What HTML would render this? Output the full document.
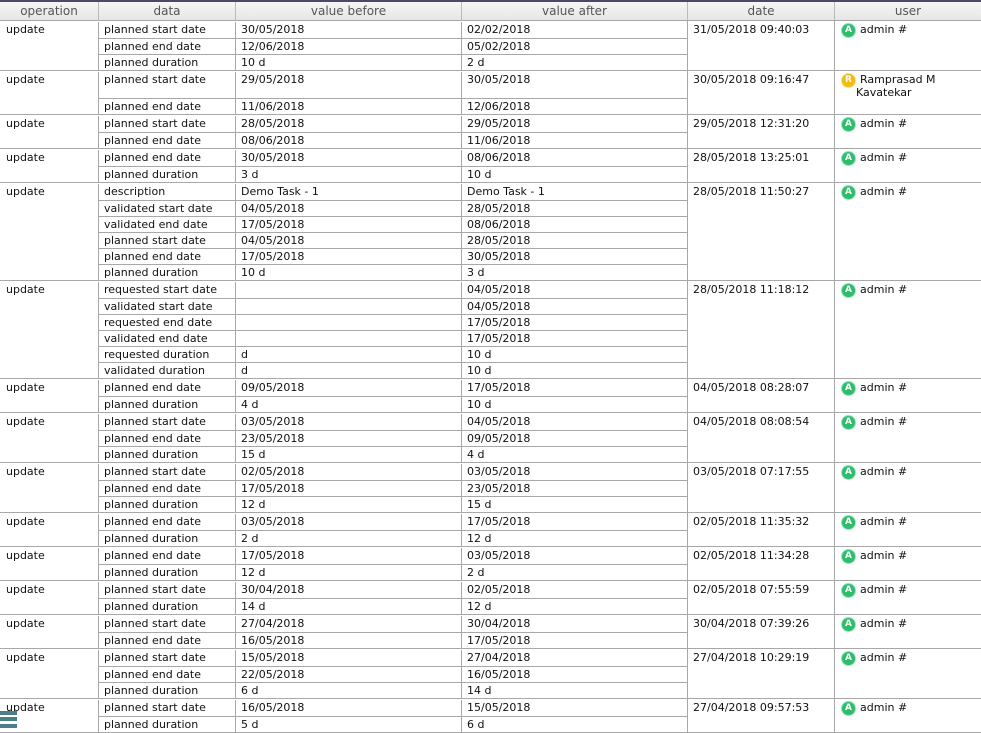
<!DOCTYPE html>
<html><head><meta charset="utf-8"><style>
*{box-sizing:border-box;margin:0;padding:0}
body{width:981px;height:731px;overflow:hidden;background:#fff;font-family:"DejaVu Sans","Liberation Sans",sans-serif;font-size:11px;color:#111;position:relative}
.top{height:2px;background:#4b4870}
.hd{display:flex;height:19px;background:linear-gradient(#f6f6f6,#e6e6e6);border-bottom:1px solid #a8a8a8;color:#555;font-size:12px}
.hd div{text-align:center;line-height:18px;border-left:1px solid #bbb}
.hd div:first-child{border-left:none}
.g{display:flex;border-bottom:1px solid #a8a8a8}
.op{width:98px;padding:1px 0 0 6px;line-height:15px}
.sub{width:589px;display:flex;flex-direction:column}
.r{display:flex;height:16px;border-bottom:1px solid #a8a8a8}
.r:first-child{height:18px;padding-top:1px}
.r:last-child{border-bottom:none;height:15px}
.r div{border-left:1px solid #a8a8a8;padding-left:5px;line-height:15px;white-space:nowrap}
.r div:nth-child(1){width:137px}
.r div:nth-child(2),.r div:nth-child(3){width:226px}
.r.t{height:28px}
.dt{width:147px;border-left:1px solid #a8a8a8;padding:1px 0 0 5px;line-height:15px}
.us{width:147px;border-left:1px solid #a8a8a8;padding:1px 0 0 25px;line-height:15px;position:relative}
.av{position:absolute;left:7px;top:3px;width:13px;height:13px;border-radius:50%;background:#2ebd6e;color:#fff;font-size:9px;font-weight:bold;text-align:center;line-height:13px;box-shadow:0 0 0 1px #9be0b8}
.av.y{background:#f0bc10;box-shadow:0 0 0 1px #f6dc80}
.ham{position:absolute;left:0;width:17px;height:4px;background:#4a7f8a}
</style></head><body>
<div class="top"></div>
<div class="hd"><div style="width:98px">operation</div><div style="width:137px">data</div><div style="width:226px">value before</div><div style="width:226px">value after</div><div style="width:147px">date</div><div style="width:147px">user</div></div>

<div class="g"><div class="op">update</div><div class="sub">
<div class="r"><div>planned start date</div><div>30/05/2018</div><div>02/02/2018</div></div>
<div class="r"><div>planned end date</div><div>12/06/2018</div><div>05/02/2018</div></div>
<div class="r"><div>planned duration</div><div>10 d</div><div>2 d</div></div>
</div><div class="dt">31/05/2018 09:40:03</div><div class="us"><span class="av">A</span>admin #</div></div>

<div class="g"><div class="op">update</div><div class="sub">
<div class="r t"><div>planned start date</div><div>29/05/2018</div><div>30/05/2018</div></div>
<div class="r"><div>planned end date</div><div>11/06/2018</div><div>12/06/2018</div></div>
</div><div class="dt">30/05/2018 09:16:47</div><div class="us" style="line-height:13px;padding:2px 0 0 21px;text-indent:4px"><span class="av y" style="text-indent:0">R</span>Ramprasad M<br>Kavatekar</div></div>

<div class="g"><div class="op">update</div><div class="sub">
<div class="r"><div>planned start date</div><div>28/05/2018</div><div>29/05/2018</div></div>
<div class="r"><div>planned end date</div><div>08/06/2018</div><div>11/06/2018</div></div>
</div><div class="dt">29/05/2018 12:31:20</div><div class="us"><span class="av">A</span>admin #</div></div>

<div class="g"><div class="op">update</div><div class="sub">
<div class="r"><div>planned end date</div><div>30/05/2018</div><div>08/06/2018</div></div>
<div class="r"><div>planned duration</div><div>3 d</div><div>10 d</div></div>
</div><div class="dt">28/05/2018 13:25:01</div><div class="us"><span class="av">A</span>admin #</div></div>

<div class="g"><div class="op">update</div><div class="sub">
<div class="r"><div>description</div><div>Demo Task - 1</div><div>Demo Task - 1</div></div>
<div class="r"><div>validated start date</div><div>04/05/2018</div><div>28/05/2018</div></div>
<div class="r"><div>validated end date</div><div>17/05/2018</div><div>08/06/2018</div></div>
<div class="r"><div>planned start date</div><div>04/05/2018</div><div>28/05/2018</div></div>
<div class="r"><div>planned end date</div><div>17/05/2018</div><div>30/05/2018</div></div>
<div class="r"><div>planned duration</div><div>10 d</div><div>3 d</div></div>
</div><div class="dt">28/05/2018 11:50:27</div><div class="us"><span class="av">A</span>admin #</div></div>

<div class="g"><div class="op">update</div><div class="sub">
<div class="r"><div>requested start date</div><div></div><div>04/05/2018</div></div>
<div class="r"><div>validated start date</div><div></div><div>04/05/2018</div></div>
<div class="r"><div>requested end date</div><div></div><div>17/05/2018</div></div>
<div class="r"><div>validated end date</div><div></div><div>17/05/2018</div></div>
<div class="r"><div>requested duration</div><div>d</div><div>10 d</div></div>
<div class="r"><div>validated duration</div><div>d</div><div>10 d</div></div>
</div><div class="dt">28/05/2018 11:18:12</div><div class="us"><span class="av">A</span>admin #</div></div>

<div class="g"><div class="op">update</div><div class="sub">
<div class="r"><div>planned end date</div><div>09/05/2018</div><div>17/05/2018</div></div>
<div class="r"><div>planned duration</div><div>4 d</div><div>10 d</div></div>
</div><div class="dt">04/05/2018 08:28:07</div><div class="us"><span class="av">A</span>admin #</div></div>

<div class="g"><div class="op">update</div><div class="sub">
<div class="r"><div>planned start date</div><div>03/05/2018</div><div>04/05/2018</div></div>
<div class="r"><div>planned end date</div><div>23/05/2018</div><div>09/05/2018</div></div>
<div class="r"><div>planned duration</div><div>15 d</div><div>4 d</div></div>
</div><div class="dt">04/05/2018 08:08:54</div><div class="us"><span class="av">A</span>admin #</div></div>

<div class="g"><div class="op">update</div><div class="sub">
<div class="r"><div>planned start date</div><div>02/05/2018</div><div>03/05/2018</div></div>
<div class="r"><div>planned end date</div><div>17/05/2018</div><div>23/05/2018</div></div>
<div class="r"><div>planned duration</div><div>12 d</div><div>15 d</div></div>
</div><div class="dt">03/05/2018 07:17:55</div><div class="us"><span class="av">A</span>admin #</div></div>

<div class="g"><div class="op">update</div><div class="sub">
<div class="r"><div>planned end date</div><div>03/05/2018</div><div>17/05/2018</div></div>
<div class="r"><div>planned duration</div><div>2 d</div><div>12 d</div></div>
</div><div class="dt">02/05/2018 11:35:32</div><div class="us"><span class="av">A</span>admin #</div></div>

<div class="g"><div class="op">update</div><div class="sub">
<div class="r"><div>planned end date</div><div>17/05/2018</div><div>03/05/2018</div></div>
<div class="r"><div>planned duration</div><div>12 d</div><div>2 d</div></div>
</div><div class="dt">02/05/2018 11:34:28</div><div class="us"><span class="av">A</span>admin #</div></div>

<div class="g"><div class="op">update</div><div class="sub">
<div class="r"><div>planned start date</div><div>30/04/2018</div><div>02/05/2018</div></div>
<div class="r"><div>planned duration</div><div>14 d</div><div>12 d</div></div>
</div><div class="dt">02/05/2018 07:55:59</div><div class="us"><span class="av">A</span>admin #</div></div>

<div class="g"><div class="op">update</div><div class="sub">
<div class="r"><div>planned start date</div><div>27/04/2018</div><div>30/04/2018</div></div>
<div class="r"><div>planned end date</div><div>16/05/2018</div><div>17/05/2018</div></div>
</div><div class="dt">30/04/2018 07:39:26</div><div class="us"><span class="av">A</span>admin #</div></div>

<div class="g"><div class="op">update</div><div class="sub">
<div class="r"><div>planned start date</div><div>15/05/2018</div><div>27/04/2018</div></div>
<div class="r"><div>planned end date</div><div>22/05/2018</div><div>16/05/2018</div></div>
<div class="r"><div>planned duration</div><div>6 d</div><div>14 d</div></div>
</div><div class="dt">27/04/2018 10:29:19</div><div class="us"><span class="av">A</span>admin #</div></div>

<div class="g"><div class="op">update</div><div class="sub">
<div class="r"><div>planned start date</div><div>16/05/2018</div><div>15/05/2018</div></div>
<div class="r"><div>planned duration</div><div>5 d</div><div>6 d</div></div>
</div><div class="dt">27/04/2018 09:57:53</div><div class="us"><span class="av">A</span>admin #</div></div>

<div class="ham" style="top:711px"></div>
<div class="ham" style="top:717px"></div>
<div class="ham" style="top:724px"></div>
</body></html>
